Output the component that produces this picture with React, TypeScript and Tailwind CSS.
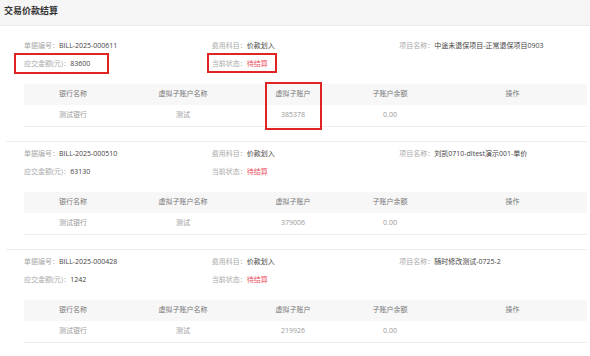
import React from 'react';

interface Bill {
  no: string;
  amount: string;
  subject: string;
  status: string;
  project: string;
  bank: string;
  accountName: string;
  account: string;
  balance: string;
}

const bills: Bill[] = [
  { no: 'BILL-2025-000611', amount: '83600', subject: '价款划入', status: '待结算', project: '中途未退保项目-正常退保项目0903', bank: '测试银行', accountName: '测试', account: '385378', balance: '0.00' },
  { no: 'BILL-2025-000510', amount: '63130', subject: '价款划入', status: '待结算', project: '刘凯0710-dltest演示001-单价', bank: '测试银行', accountName: '测试', account: '379006', balance: '0.00' },
  { no: 'BILL-2025-000428', amount: '1242', subject: '价款划入', status: '待结算', project: '随时修改测试-0725-2', bank: '测试银行', accountName: '测试', account: '219926', balance: '0.00' },
];

const cols = [
  { title: '银行名称', w: 'w-[98px]' },
  { title: '虚拟子账户名称', w: 'w-[122px]' },
  { title: '虚拟子账户', w: 'w-[98px]' },
  { title: '子账户余额', w: 'w-[96px]' },
  { title: '操作', w: 'w-[149px]' },
];

const Field: React.FC<{ label: string; value: string; red?: boolean }> = ({ label, value, red }) => (
  <div className="h-[18px] flex items-center whitespace-nowrap">
    <span className="text-[#aaaaaa]">{label}：</span>
    <span className={red ? 'text-[#ec4d5a]' : 'text-[#444444]'}>{value}</span>
  </div>
);

const BillBlock: React.FC<{ bill: Bill }> = ({ bill }) => {
  const cells = [bill.bank, bill.accountName, bill.account, bill.balance, ''];
  return (
    <div className="pl-[18px] pt-[3px] pb-[14px] border-b border-[#eeeeee]">
      <div className="grid grid-cols-3">
        <div>
          <Field label="单据编号" value={bill.no} />
          <Field label="应交金额(元)" value={bill.amount} />
        </div>
        <div>
          <Field label="费用科目" value={bill.subject} />
          <Field label="当前状态" value={bill.status} red />
        </div>
        <div>
          <Field label="项目名称" value={bill.project} />
        </div>
      </div>
      <div className="mt-[11px]">
        <div className="flex h-[21px] items-center bg-[#f7f7f7] text-[#777777]">
          {cols.map((c) => (
            <div key={c.title} className={`${c.w} text-center`}>{c.title}</div>
          ))}
        </div>
        <div className="flex h-[22px] items-center border-b border-[#eeeeee] text-[#999999]">
          {cols.map((c, i) => (
            <div key={c.title} className={`${c.w} text-center`}>{cells[i]}</div>
          ))}
        </div>
      </div>
    </div>
  );
};

export default function App() {
  return (
    <div
      className="relative w-[590px] h-[356px] overflow-hidden bg-white text-[7px]"
      style={{ fontFamily: '"Open Sans", "Noto Sans CJK SC", sans-serif' }}
    >
      <div className="h-[26px] flex items-center pb-[3px] pl-[4px] bg-[#f5f5f5] border-b border-[#ebebeb]">
        <h1 className="text-[9px] font-bold text-[#333333]">交易价款结算</h1>
      </div>
      <div className="pt-[8px] pl-[6px] pr-[3px]">
        {bills.map((b) => (
          <BillBlock key={b.no} bill={b} />
        ))}
      </div>

      {/* annotation boxes */}
      <div className="absolute left-[14px] top-[53px] w-[95px] h-[21px] border-2 border-[#e02424]" />
      <div className="absolute left-[207px] top-[53px] w-[70px] h-[20px] border-2 border-[#e02424]" />
      <div className="absolute left-[265px] top-[82px] w-[57px] h-[48px] border-2 border-[#e02424]" />
    </div>
  );
}
